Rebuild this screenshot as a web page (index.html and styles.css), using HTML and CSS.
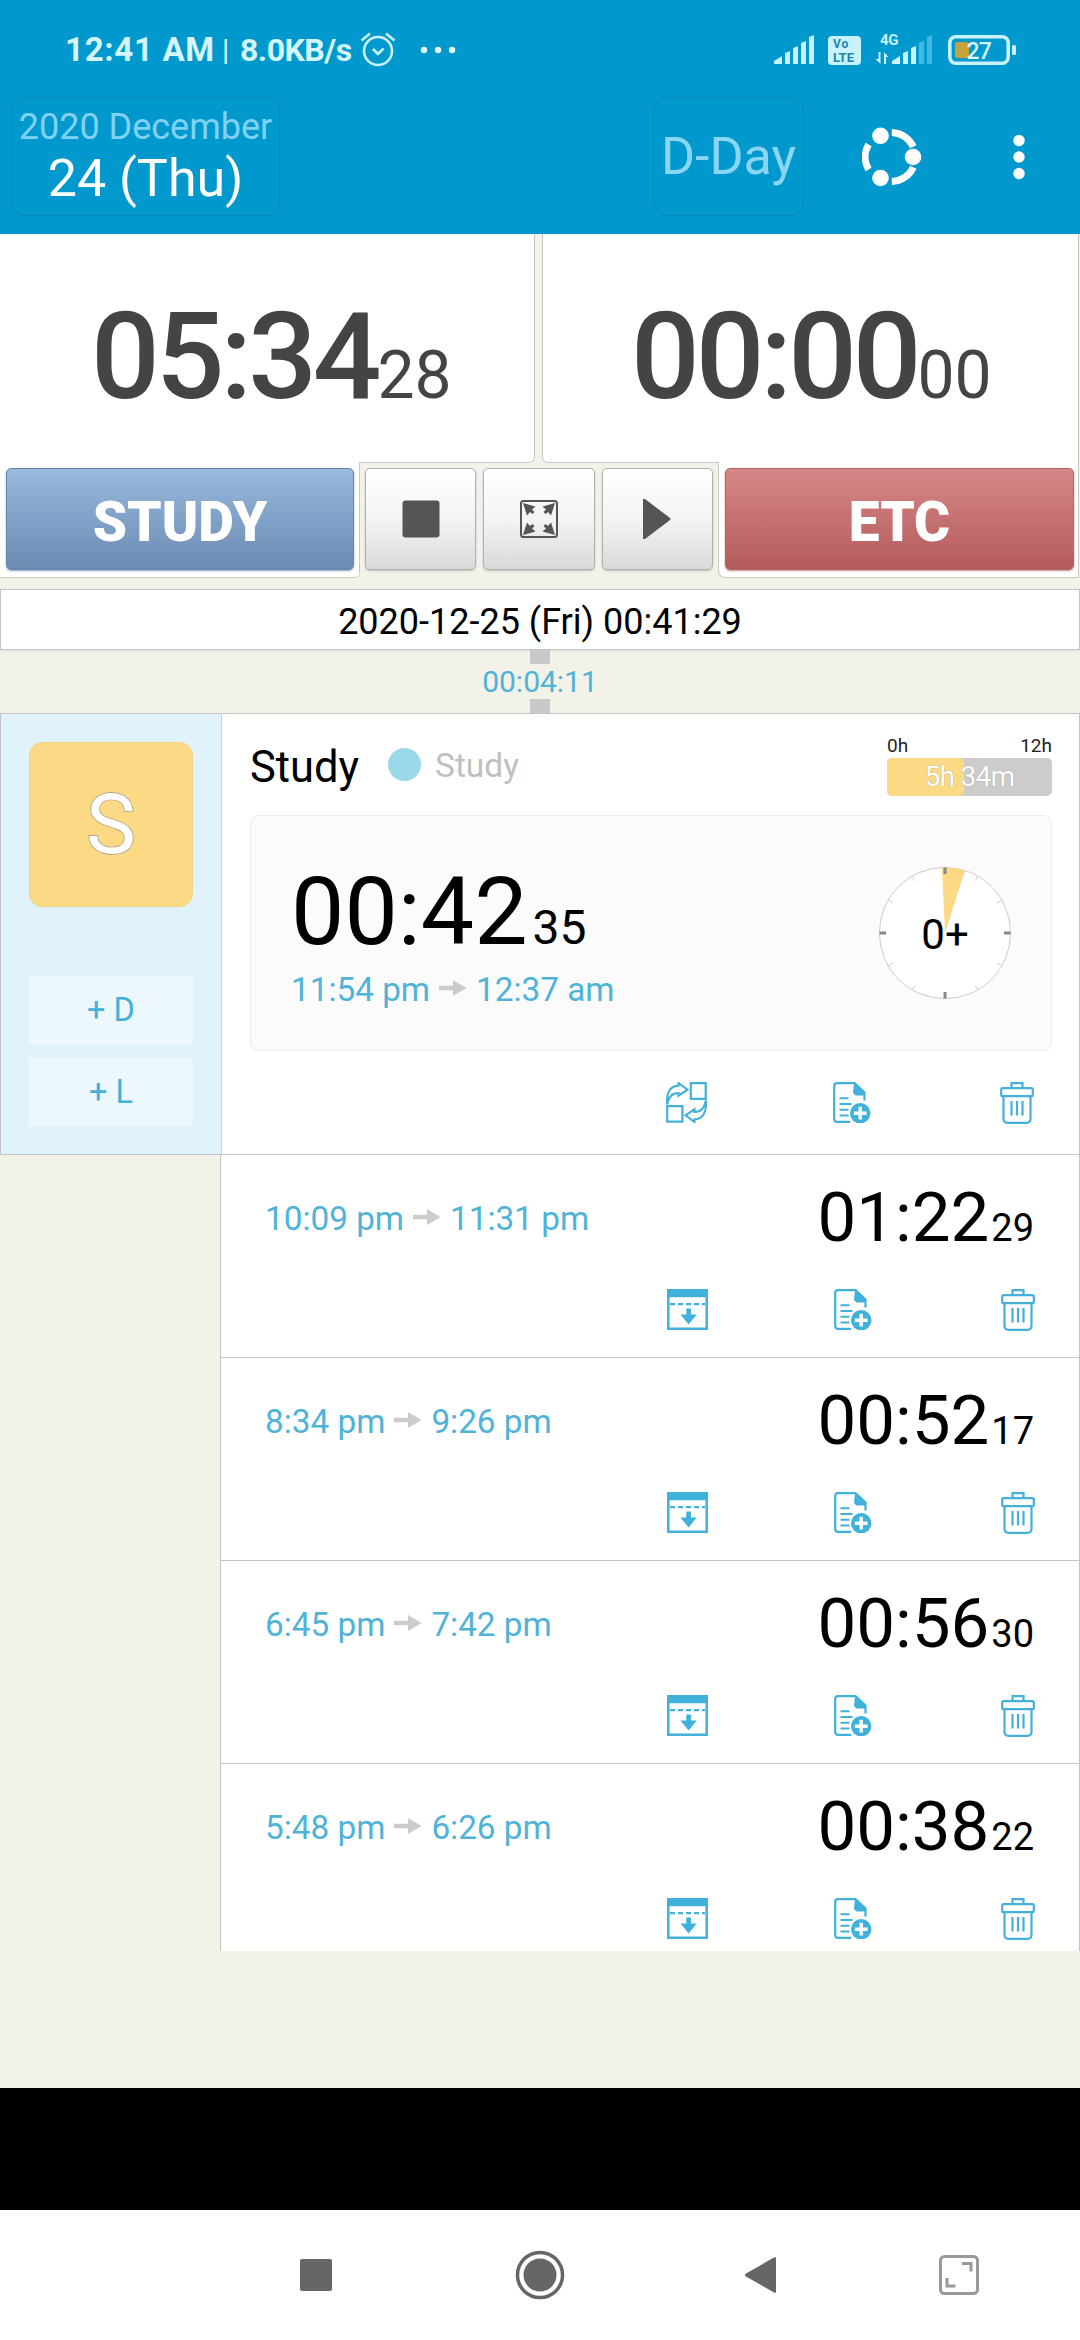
FILE: index.html
```html
<!DOCTYPE html>
<html lang="en">
<head>
<meta charset="utf-8">
<title>Study timer</title>
<link rel="stylesheet" href="styles.css">
</head>
<body>
<svg class="defs" aria-hidden="true">
  <symbol id="swap" viewBox="0 0 41 41">
    <path d="M24.800 1.200h14.900v15.600H24.800zM1.200 24.200h15.200v15.500H1.200z" fill="none" stroke="#45b0d8" stroke-width="2.200"/>
    <path d="M1.200 22.500C0 10 4.500 3.800 12.500 3.600V1l9 6.700-9 6V11C5.500 11 2.800 15 1.200 22.500zM39.800 18.500C41 31 36.500 37.200 28.500 37.400V40l-9-6.700 9-6V30c7 0 9.700-4 11.300-11.500z" fill="none" stroke="#45b0d8" stroke-width="2.100"/>
  </symbol>
  <symbol id="note" viewBox="0 0 38 41">
    <path d="M17 39.800H4Q1.200 39.800 1.200 37V4Q1.200 1.200 4 1.200H21.500L31.500 10.500V18.500" fill="none" stroke="#3fb1db" stroke-width="2.200"/>
    <path d="M21 1L32 11.500V13.500H22.500L20 11z" fill="#3fb1db"/>
    <path d="M6.500 16.200h9M6.500 22h12M6.500 27.800h9M6.500 33.600h9" stroke="#3fb1db" stroke-width="2"/>
    <circle cx="27.200" cy="31.200" r="10.200" fill="#3fb1db"/>
    <path d="M27.200 24.800v12.800M20.800 31.200h12.800" stroke="#fff" stroke-width="3.400"/>
  </symbol>
  <symbol id="trash" viewBox="0 0 34 42">
    <g fill="none" stroke="#45b0d8" stroke-width="2.200">
      <path d="M11.500 6V1.200h11V6"/><rect x="1.200" y="6.200" width="31.600" height="8" rx="1.500"/>
      <path d="M3.500 14.500V36.500Q3.500 40.800 7.500 40.800H26.500Q30.500 40.800 30.500 36.500V14.500M11.500 19v14.500M17 19v14.500M22.500 19v14.500"/>
    </g>
  </symbol>
  <symbol id="merge" viewBox="0 0 41 41">
    <path d="M1.300 1.300h38.400v38.400H1.300z" fill="none" stroke="#45b0d8" stroke-width="2.500"/>
    <path d="M0 0h41v8.300H0z" fill="#3fb1db"/>
    <path d="M3 15.200h35" stroke="#45b0d8" stroke-width="2.200" stroke-dasharray="5 3"/>
    <path d="M19.300 19.500h4.600v6h5.800L21.600 35.500 13.500 25.500h5.800z" fill="#3fb1db"/>
  </symbol>
  <symbol id="arrow" viewBox="0 0 28 16">
    <path d="M0 5.800h14V0l13.500 8L14 16v-5.800H0z" fill="#ccc"/>
  </symbol>
</svg>

<header class="topbar">
  <div class="status">
    <span class="clock">12:41 AM</span><span class="pipe">|</span><span class="speed">8.0KB/s</span>
    <svg class="alarm" width="36" height="36" viewBox="0 0 36 36" fill="none" stroke="#c9f2ff" stroke-width="2.600">
      <circle cx="18" cy="19" r="14"/><path d="M1.500 8.500L10 1.500M26 1.500l8.500 7M13 17l5 5 5.500-5.500"/>
    </svg>
    <svg class="more" width="36" height="8" fill="#e8fbff"><circle cx="4" cy="4" r="3.200"/><circle cx="18" cy="4" r="3.200"/><circle cx="32" cy="4" r="3.200"/></svg>
    <svg class="tray" width="246" height="50" viewBox="772 24 246 50">
      <g fill="#c9f2ff">
        <path d="M774 63v-3l8-5v8zM785 63V52l5-2v13zM793 63V47l5-2v18zM801 63V42l5-2v23zM809 63V36l5-2v29z"/>
        <rect x="828" y="35" width="33" height="29" rx="4"/>
        <path d="M892 63v-3l8-5v8zM903 63V52l5-2v13zM911 63V47l5-2v18z"/>
        <path d="M919 63V42l5-2v23zM927 63V36l5-2v29z" opacity=".35"/>
        <path d="M878.500 51h2v12l-5-5h3zM884 63h2V56h2.500L884 51z"/>
        <rect x="1012" y="44" width="4" height="10" rx="1.500"/>
      </g>
      <rect x="949.800" y="35.800" width="58.400" height="26.400" rx="6" fill="none" stroke="#c9f2ff" stroke-width="3.600"/>
      <rect x="955" y="41" width="14" height="16" rx="2" fill="#c6a13c"/>
      <text class="tray-vo" x="833" y="46.500">Vo</text><text class="tray-lte" x="833" y="61">LTE</text>
      <text class="tray-4g" x="880" y="44">4G</text>
      <text class="tray-battery" x="966.500" y="58">27</text>
    </svg>
  </div>
  <div class="appbar">
    <button class="ghost date"><span class="month">2020 December</span><span class="day">24 (Thu)</span></button>
    <button class="ghost dday">D-Day</button>
    <svg class="share" width="60" height="60" viewBox="0 0 60 60" fill="#fff">
      <path d="M29.800 5.500a24.500 24.500 0 0 1 21.500 14.300M29.800 54.500a24.500 24.500 0 0 0 21.500-14.300M6.600 42.500a24.500 24.500 0 0 1 0-25" fill="none" stroke="#fff" stroke-width="7"/>
      <circle cx="18.500" cy="8.800" r="8.300"/><circle cx="51" cy="30" r="8.300"/><circle cx="18.500" cy="51" r="8.300"/>
    </svg>
    <svg class="menu" width="12" height="46" fill="#fff"><circle cx="6" cy="6.500" r="5.700"/><circle cx="6" cy="23" r="5.700"/><circle cx="6" cy="39.500" r="5.700"/></svg>
  </div>
</header>

<main>
  <section class="timers">
    <div class="panel left"><span class="big">05:34</span><span class="sec">28</span></div>
    <div class="panel right"><span class="big">00:00</span><span class="sec">00</span></div>
  </section>
  <section class="controls">
    <div class="tab tab-left"><button class="mode study">STUDY</button></div>
    <div class="tools">
      <button class="tool"><svg width="38" height="38"><rect x=".5" y=".5" width="37" height="37" rx="3" fill="#555"/></svg></button>
      <button class="tool"><svg width="38" height="38" fill="#555"><rect x="1" y="1" width="36" height="36" rx="2.500" fill="none" stroke="#555" stroke-width="2"/><path id="corner" d="M3 3l12.500 3.500-3.500 3 2.500 2.500-2 2-2.500-2L7 15.500z"/><use href="#corner" transform="matrix(-1 0 0 1 38 0)"/><use href="#corner" transform="matrix(1 0 0 -1 0 38)"/><use href="#corner" transform="matrix(-1 0 0 -1 38 38)"/></svg></button>
      <button class="tool"><svg width="30" height="42"><path d="M3 1L28 20q1 1 0 2L3 41H1V1z" fill="#555"/></svg></button>
    </div>
    <div class="tab tab-right"><button class="mode etc">ETC</button></div>
  </section>

  <div class="now">2020-12-25 (Fri) 00:41:29</div>
  <div class="gap">00:04:11</div>

  <section class="card">
    <aside class="side">
      <div class="tile">S</div>
      <button class="add">+ D</button>
      <button class="add">+ L</button>
    </aside>
    <div class="detail">
      <div class="head">
        <span class="title">Study</span><i class="dot"></i><span class="group">Study</span>
        <div class="goal">
          <div class="scale"><span>0h</span><span>12h</span></div>
          <div class="bar"><div class="fill" style="width:46.400%"></div><span class="amount">5h 34m</span></div>
        </div>
      </div>
      <div class="session">
        <div class="session-info">
          <div class="length"><span class="hm">00:42</span><span class="s">35</span></div>
          <div class="range">11:54 pm<svg><use href="#arrow"/></svg>12:37 am</div>
        </div>
        <svg class="dial" width="134" height="134" viewBox="-67 -67 134 134">
          <circle r="65.600" fill="#fff" stroke="#ccc" stroke-width="1"/>
          <path d="M0 0L-3-65.500A65.600 65.600 0 0 1 20-62.500z" fill="#fbd985"/>
          <path d="M0-65.500v6.500M0 65.500v-6.500M-65.500 0h6.500M65.500 0h-6.500" stroke="#888" stroke-width="3"/>
          <path d="M32.700-56.700l-2.500 4.400M56.700-32.700l-4.900 2.800M56.700 32.700l-4.900-2.800M32.700 56.700l-2.500-4.400M-32.700 56.700l2.500-4.400M-56.700 32.700l4.900-2.800M-56.700-32.700l4.900 2.800M-32.700-56.700l2.500 4.400" stroke="#ccc"/>
          <text class="dial-text" x="0" y="15.500">0+</text>
        </svg>
      </div>
      <div class="actions"><svg class="i-a"><use href="#swap"/></svg><svg class="i-b"><use href="#note"/></svg><svg class="i-c"><use href="#trash"/></svg></div>
    </div>
  </section>

  <section class="list">
    <article class="row"><div class="line"><div class="range">10:09 pm<svg><use href="#arrow"/></svg>11:31 pm</div><div class="total">01:22<small>29</small></div></div>
      <div class="actions"><svg class="i-a"><use href="#merge"/></svg><svg class="i-b"><use href="#note"/></svg><svg class="i-c"><use href="#trash"/></svg></div></article>
    <article class="row"><div class="line"><div class="range">8:34 pm<svg><use href="#arrow"/></svg>9:26 pm</div><div class="total">00:52<small>17</small></div></div>
      <div class="actions"><svg class="i-a"><use href="#merge"/></svg><svg class="i-b"><use href="#note"/></svg><svg class="i-c"><use href="#trash"/></svg></div></article>
    <article class="row"><div class="line"><div class="range">6:45 pm<svg><use href="#arrow"/></svg>7:42 pm</div><div class="total">00:56<small>30</small></div></div>
      <div class="actions"><svg class="i-a"><use href="#merge"/></svg><svg class="i-b"><use href="#note"/></svg><svg class="i-c"><use href="#trash"/></svg></div></article>
    <article class="row"><div class="line"><div class="range">5:48 pm<svg><use href="#arrow"/></svg>6:26 pm</div><div class="total">00:38<small>22</small></div></div>
      <div class="actions"><svg class="i-a"><use href="#merge"/></svg><svg class="i-b"><use href="#note"/></svg><svg class="i-c"><use href="#trash"/></svg></div></article>
  </section>
</main>

<div class="banner"></div>
<nav class="navbar">
  <svg width="1080" height="130" viewBox="0 0 1080 130" fill="#666">
    <rect x="300" y="49" width="32" height="32" rx="2"/>
    <circle cx="540" cy="65" r="22.500" fill="none" stroke="#666" stroke-width="3.500"/><circle cx="540" cy="65" r="16.500"/>
    <path d="M746 63.500L774 47.500q2-1 2 1v33q0 2-2 1L746 66.500q-2-1.500 0-3z"/>
    <g fill="none" stroke="#999" stroke-width="3"><rect x="940.500" y="46.500" width="37" height="37" rx="4"/><path d="M962 53.500h9v8M947 68v8h8.500"/></g>
  </svg>
</nav>
</body>
</html>
```
FILE: styles.css
```css
* { box-sizing: border-box; }
body {
  margin: 0;
  width: 1080px;
  height: 2340px;
  overflow: hidden;
  display: flex;
  flex-direction: column;
  background: #f2f2e9;
  font-family: Roboto, "Liberation Sans", sans-serif;
  color: #000;
}
button { font: inherit; border: 0; padding: 0; margin: 0; }
svg { display: block; flex: none; }
.defs { position: absolute; width: 0; height: 0; }

.topbar { height: 234px; background: #0199cd; flex: none; }
.status { display: flex; align-items: center; height: 97px; padding: 2px 64px 0 65px; color: #d5f6ff; }
.clock { font-size: 33px; font-weight: 700; letter-spacing: .7px; width: 157px; white-space: nowrap; }
.pipe { font-size: 29px; font-weight: 500; width: 18px; }
.speed { font-size: 32px; font-weight: 700; letter-spacing: -.5px; width: 120px; }
.more { margin-left: 24px; }
.tray { margin-left: auto; margin-right: -2px; }
.tray-vo { font: 700 12px Roboto, sans-serif; fill: #1b87b0; letter-spacing: 1px; }
.tray-lte { font: 700 13px Roboto, sans-serif; fill: #1b87b0; }
.tray-4g { font: 700 15px Roboto, sans-serif; fill: #c9f2ff; letter-spacing: -.3px; }
.tray-battery { font: 500 23px Roboto, sans-serif; fill: #d5f6ff; letter-spacing: -.8px; }

.appbar { display: flex; align-items: center; height: 119px; padding-left: 11px; }
.ghost { height: 119px; border: 1px solid #0787b5; border-radius: 14px; background: none; text-align: center; white-space: nowrap; }
.date { width: 269px; display: flex; flex-direction: column; align-items: center; padding-top: 7px; }
.month { font-size: 36px; line-height: 44px; color: #7fd2f2; }
.day { font-size: 52px; line-height: 59px; color: #fff; }
.dday { width: 151px; margin-left: 373px; font-size: 52px; color: #8ad6f2; }
.share { margin-left: 58px; }
.menu { margin-left: 91px; }

.timers { display: flex; justify-content: space-between; height: 228px; padding-right: 1px; }
.panel { display: flex; align-items: baseline; background: #fff; border: 1px solid #c8c8c4; border-top: 0; color: #444; height: 229px; padding-top: 52px; }
.left { width: 535px; border-left: 0; border-radius: 0 0 6px 0; padding-left: 91px; }
.right { width: 537px; border-radius: 0 0 0 6px; padding-left: 88px; }
.big { font-size: 121px; font-weight: 500; letter-spacing: -4.100px; line-height: 142px; }
.sec { font-size: 66px; }

.controls { display: flex; height: 127px; align-items: flex-start; padding-right: 1px; }
.tab { background: #fff; height: 116px; padding-top: 6px; position: relative; border: 1px solid #c8c8c4; border-top: 0; }
.tab-left { width: 360px; padding-left: 6px; border-left: 0; border-radius: 0 0 5px 0; }
.tab-right { width: 361px; padding-left: 6px; border-radius: 0 0 0 7px; }
.mode { display: block; height: 102px; border-radius: 5px; color: #fff; font-size: 55px; font-weight: 900; padding-top: 6px; }
.study { width: 348px; background: linear-gradient(#97badd, #6b8ab3); border: 1px solid #6787ac; box-shadow: 0 1px 2px #8fa5bf; }
.etc { width: 349px; background: linear-gradient(#d88788, #b35b5a); border: 1px solid #b06465; box-shadow: 0 1px 2px #c89090; }
.tools { display: flex; gap: 7px; padding: 6px 5px 0; width: 358px; }
.tool { flex: 1; height: 102px; display: flex; align-items: center; justify-content: center; border: 1px solid #b2b2b0; border-radius: 5px; background: linear-gradient(#fff, #f4f4f4 50%, #d9d9d9); box-shadow: 0 1px 2px #bbb; }

.now { height: 61px; background: #fff; border: 1px solid #c4c4c4; font-size: 36px; line-height: 64px; text-align: center; box-shadow: 0 1px 2px #ddd; }
.gap { height: 63px; display: flex; flex-direction: column; align-items: center; justify-content: space-between; font-size: 30px; line-height: 35px; color: #4fb3d8; }
.gap::before, .gap::after { content: ""; width: 20px; height: 14px; background: #c8c8ca; }

.card { display: flex; height: 442px; background: #fff; border: 1px solid #c4c4c4; }
.side { width: 221px; background: #e0f3fb; border-right: 1px solid #c9d5d9; padding: 28px 28px 0; }
.tile { height: 165px; border-radius: 13px; background: #fbd985; border: 1px solid #f1d58c; color: #fff; font-size: 84px; line-height: 163px; text-align: center; -webkit-text-stroke: 1.800px #b5a88a; paint-order: stroke; margin-bottom: 69px; }
.add { display: block; width: 164px; height: 68px; background: #ecf8fd; color: #45b0d8; font-size: 32.500px; text-align: center; margin-bottom: 14px; }
.detail { flex: 1; padding: 0 27px 0 28px; }
.head { height: 101px; display: flex; align-items: flex-start; }
.title { font-size: 43.500px; line-height: 50px; margin-top: 29px; width: 138px; }
.dot { width: 33px; height: 33px; border-radius: 50%; background: #9bd8e9; margin-top: 34px; }
.group { font-size: 33.500px; line-height: 40px; margin: 32px 0 0 14px; color: #bfbfbf; }
.goal { margin-left: auto; width: 165px; padding-top: 20px; }
.scale { display: flex; justify-content: space-between; font-size: 19px; line-height: 24px; color: #222; }
.bar { height: 38px; border-radius: 5px; background: #ccc; display: grid; overflow: hidden; }
.fill, .amount { grid-area: 1 / 1; }
.fill { background: #fbd985; border-radius: 5px; }
.amount { text-align: center; font-size: 28px; letter-spacing: -.7px; line-height: 38px; color: #fff; text-shadow: 0 0 1px #888; z-index: 1; }
.session { height: 236px; border: 1px solid #ececec; border-radius: 9px; background: #fbfbfb; display: flex; justify-content: space-between; padding: 50px 39px 0 40px; }
.length { display: flex; align-items: baseline; height: 92px; line-height: 92px; }
.hm { font-size: 95px; }
.s { font-size: 48px; margin-left: 5px; }
.range { display: flex; align-items: center; font-size: 33.300px; line-height: 40px; color: #4fb3d8; white-space: nowrap; }
.range svg { width: 28px; height: 16px; margin: -4px 9px 0; }
.session .range { margin-top: 12px; }
.dial-text { font: 42px Roboto, sans-serif; text-anchor: middle; }
.actions { display: flex; }
.i-a { width: 41px; height: 41px; }
.i-b { width: 38px; height: 41px; margin-left: 126px; }
.i-c { width: 34px; height: 42px; margin-left: 129px; }
.card .actions { padding: 31px 0 0 416px; }

.list { margin-left: 220px; height: 796px; overflow: hidden; background: #fff; border-left: 1px solid #c4c4c4; border-right: 1px solid #c4c4c4; }
.row { height: 203px; border-bottom: 1px solid #c4c4c4; padding: 0 45px 0 44px; }
.line { display: flex; justify-content: space-between; height: 134px; }
.line .range { height: 40px; margin-top: 44px; }
.total { font-size: 69px; line-height: 80px; margin-top: 23px; }
.total small { font-size: 38px; margin-left: 2px; }
.row .actions { padding-left: 402px; }

.banner { height: 122px; margin-top: auto; background: #000; flex: none; }
.navbar { height: 130px; background: #fff; flex: none; }
```
